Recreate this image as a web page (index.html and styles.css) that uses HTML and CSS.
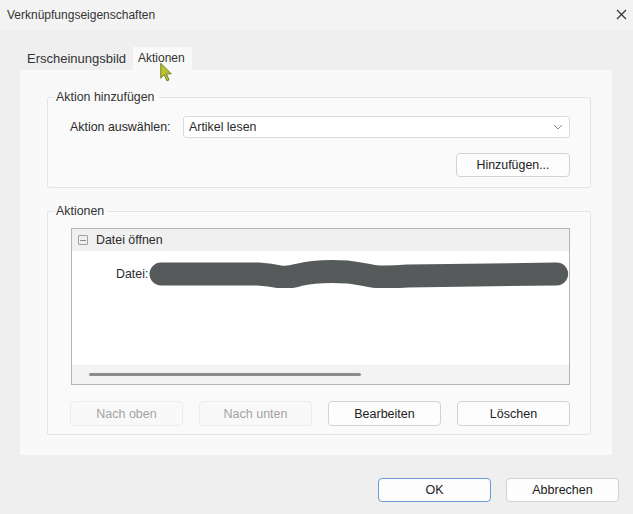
FILE: index.html
```html
<!DOCTYPE html>
<html lang="de">
<head>
  <meta charset="UTF-8" />
  <meta name="viewport" content="width=device-width, initial-scale=1.0"/>
  <title>Verknüpfungseigenschaften</title>
  <link rel="stylesheet" href="styles.css">
</head>
<body>
  <div class="window">
    <div class="titlebar">
      <span class="title">Verknüpfungseigenschaften</span>
      <svg class="close" width="11" height="11" viewBox="0 0 11 11">
        <path d="M1 1 L10 10 M10 1 L1 10" stroke="#3a3a3a" stroke-width="1.3" fill="none"/>
      </svg>
    </div>

    <div class="tabs">
      <span class="tab">Erscheinungsbild</span>
      <span class="tab active">Aktionen</span>
    </div>

    <div class="panel">
      <fieldset class="group group-add">
        <legend>Aktion hinzufügen</legend>
        <div class="select-row">
          <span class="label">Aktion auswählen:</span>
          <div class="select">
            <span>Artikel lesen</span>
            <svg width="10" height="6" viewBox="0 0 10 6">
              <path d="M1 1 L5 5 L9 1" stroke="#8a8a8a" stroke-width="1" fill="none"/>
            </svg>
          </div>
        </div>
        <div class="add-row">
          <button class="btn btn-add">Hinzufügen...</button>
        </div>
      </fieldset>

      <fieldset class="group group-actions">
        <legend>Aktionen</legend>
        <div class="tree">
          <div class="tree-head">
            <span class="toggle"></span>
            <span>Datei öffnen</span>
          </div>
          <div class="tree-body">
            <div class="tree-item">
              <span>Datei:</span>
              <svg class="redact" width="422" height="28" viewBox="0 0 422 28">
                <path d="M12 14 L110 14 Q122 15 132 17 Q140 18 150 15 Q170 10 200 12 Q214 14 224 16 Q236 18 260 16 L410 14"
                      stroke="#565a5a" stroke-width="23" stroke-linecap="round" stroke-linejoin="round" fill="none"/>
              </svg>
            </div>
          </div>
          <div class="tree-scroll">
            <div class="thumb"></div>
          </div>
        </div>
        <div class="action-buttons">
          <button class="btn disabled">Nach oben</button>
          <button class="btn disabled">Nach unten</button>
          <button class="btn">Bearbeiten</button>
          <button class="btn">Löschen</button>
        </div>
      </fieldset>
    </div>

    <div class="footer">
      <button class="btn btn-default">OK</button>
      <button class="btn">Abbrechen</button>
    </div>

    <svg class="cursor" width="14" height="21" viewBox="0 0 15 24">
      <path d="M1.5 1.5 L1.5 18.5 L5.5 14.5 L8.5 21.5 L11 20.5 L8 13.5 L13.5 13.5 Z"
            fill="#bcc22e" stroke="#66701c" stroke-width="1"/>
    </svg>
  </div>
</body>
</html>
```

FILE: styles.css
```css
body {
  margin: 0;
  background: #efefef;
  font-family: "Liberation Sans", Arial, sans-serif;
  font-size: 12.4px;
  color: #2b2b2b;
}

.window {
  position: relative;
  width: 633px;
  height: 514px;
  overflow: hidden;
}

.titlebar {
  height: 30px;
  display: flex;
  align-items: center;
  justify-content: space-between;
  padding: 0 6px 0 7px;
  background: #f3f3f3;
}

.title {
  font-size: 12px;
  color: #333;
}

.close {
  margin-top: -2px;
}

.tabs {
  display: flex;
  align-items: flex-end;
  height: 23px;
  margin: 17px 0 0 20px;
}

.tab {
  padding: 0 7px 4px 7px;
  font-size: 13px;
  color: #333;
}

.tab.active {
  height: 23px;
  box-sizing: border-box;
  padding: 4px 7px 0 5px;
  background: #f9f9f9;
  font-size: 12px;
}

.panel {
  width: 592px;
  height: 385px;
  box-sizing: border-box;
  margin-left: 20px;
  padding: 20px 21px 0 27px;
  background: #f9f9f9;
}

.group {
  margin: 0;
  border: 1px solid #e4e4e4;
  border-radius: 2px;
  background: #fafafa;
  min-width: 0;
}

.group legend {
  padding: 0 4px 0 1px;
  line-height: 14px;
  color: #333;
}

.group-add {
  padding: 12px 20px 10px 22px;
}

.group-add legend {
  margin-left: -15px;
}

.select-row {
  display: flex;
  align-items: center;
}

.label {
  width: 113px;
}

.select {
  flex: 1;
  height: 22px;
  box-sizing: border-box;
  display: flex;
  align-items: center;
  justify-content: space-between;
  padding: 0 6px 0 5px;
  background: #fff;
  border: 1px solid #dadada;
  border-radius: 3px;
}

.add-row {
  display: flex;
  justify-content: flex-end;
  margin-top: 15px;
}

.btn {
  height: 24px;
  width: 113px;
  box-sizing: border-box;
  font-family: inherit;
  font-size: 12.5px;
  color: #222;
  background: #fdfdfd;
  border: 1px solid #d3d3d3;
  border-radius: 4px;
  padding: 0;
}

.btn-add {
  width: 114px;
  font-size: 12.4px;
}

.group-actions {
  margin-top: 16px;
  padding: 10px 20px 8px 23px;
}

.group-actions legend {
  margin-left: -16px;
}

.tree {
  height: 157px;
  box-sizing: border-box;
  display: flex;
  flex-direction: column;
  border: 1px solid #b5b5b5;
  background: #fff;
}

.tree-head {
  height: 22px;
  display: flex;
  align-items: center;
  gap: 8px;
  padding-left: 6px;
  background: #f0f0f0;
}

.toggle {
  width: 8px;
  height: 8px;
  border: 1px solid #a0a0a0;
  border-radius: 1px;
  background: linear-gradient(#8a8a8a, #8a8a8a) center / 6px 1px no-repeat;
}

.tree-body {
  flex: 1;
}

.tree-item {
  display: flex;
  align-items: center;
  padding: 9px 0 0 44px;
}

.redact {
  margin-left: 1px;
}

.tree-scroll {
  height: 19px;
  display: flex;
  align-items: center;
  padding-left: 17px;
  background: #f3f3f3;
}

.thumb {
  width: 272px;
  height: 3px;
  border-radius: 2px;
  background: #8c8c8c;
}

.action-buttons {
  display: flex;
  gap: 16px;
  margin-top: 16px;
  margin-left: -1px;
}

.action-buttons .btn {
  height: 25px;
}

.btn.disabled {
  color: #a3a3a3;
  background: #f9f9f9;
  border-color: #ececec;
}

.footer {
  display: flex;
  justify-content: flex-end;
  gap: 15px;
  margin-top: 23px;
  padding-right: 14px;
}

.btn-default {
  border: 1.5px solid #6b9bd0;
}

.cursor {
  position: absolute;
  left: 159px;
  top: 62px;
}
```
